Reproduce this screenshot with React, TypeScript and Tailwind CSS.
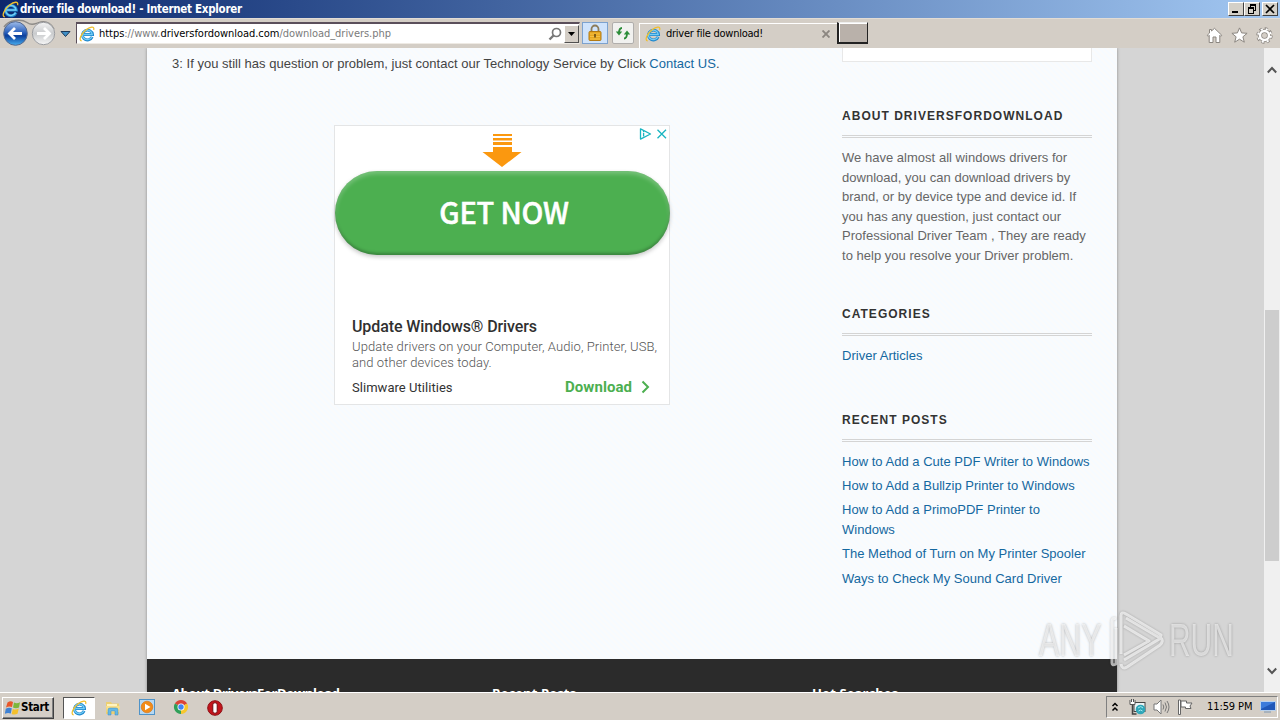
import React from 'react';
import clsx from 'clsx';

const TAHOMA = "font-['DejaVu_Sans_Condensed','DejaVu_Sans',sans-serif] [font-stretch:condensed]";

const recentPosts = [
  'How to Add a Cute PDF Writer to Windows',
  'How to Add a Bullzip Printer to Windows',
  'How to Add a PrimoPDF Printer to Windows',
  'The Method of Turn on My Printer Spooler',
  'Ways to Check My Sound Card Driver'
];

const IeIcon = ({ className }: { className?: string }) => (
  <svg viewBox="0 0 18 18" className={clsx('shrink-0', className)} fill="none">
    <path d="M14.800 12.300A5.700 5.500 0 1 1 15.200 9.600H5" stroke="#1d86cc" strokeWidth="3.200" />
    <path d="M14.400 12.300A5.500 5.300 0 1 1 14.900 9.600H5" stroke="#74cdf5" strokeWidth="1.500" />
    <path d="M3 16.800C-.8 16.500 2 9 8 4.300 12.500.9 17.800-.3 16.500 4.500" stroke="#f0bf2e" strokeWidth="1.400" />
  </svg>
);

const TitleBar = () => (
  <div className="flex h-[18px] shrink-0 items-center bg-linear-to-r from-[#0c266c] to-[#a3c8f2] pl-[2px] pr-[2px]">
    <IeIcon className="h-[17px] w-[17px]" />
    <span className={clsx(TAHOMA, 'ml-[1px] text-[11.500px] font-bold leading-[18px] whitespace-nowrap text-white tracking-[-0.29px]')}>
      driver file download! - Internet Explorer
    </span>
    <div className="ml-auto flex">
      {['min', 'restore', 'close'].map(kind => (
        <div
          key={kind}
          className={clsx(
            'h-[14px] w-4 border border-t-white border-l-white border-r-[#404040] border-b-[#404040] bg-[#d4d0c8]',
            kind === 'close' && 'ml-[2px]'
          )}
        >
          <svg viewBox="0 0 14 12" className="h-3 w-[14px]" fill="none" stroke="#000" shapeRendering="crispEdges">
            {kind === 'min' && <path d="M3 9h6" strokeWidth="2" />}
            {kind === 'restore' && (
              <>
                <path d="M5 2h6M3 5h6" strokeWidth="2" />
                <path d="M5.500 3v1M10.500 3v4.500H9M3.500 6v4.500h5V6" />
              </>
            )}
            {kind === 'close' && <path d="M3 2l8 8M11 2l-8 8" strokeWidth="1.700" shapeRendering="auto" />}
          </svg>
        </div>
      ))}
    </div>
  </div>
);

const NavButtons = () => (
  <svg viewBox="0 0 76 30" className="h-[30px] w-[76px] shrink-0">
    <defs>
      <linearGradient id="back" x1="0" y1="0" x2="0" y2="1">
        <stop offset="0" stopColor="#9fbdea" />
        <stop offset=".45" stopColor="#2c62bd" />
        <stop offset=".6" stopColor="#0b3f9c" />
        <stop offset="1" stopColor="#48aef0" />
      </linearGradient>
      <linearGradient id="forward" x1="0" y1="0" x2="0" y2="1">
        <stop offset="0" stopColor="#f4f4f4" />
        <stop offset=".5" stopColor="#c9cbcd" />
        <stop offset="1" stopColor="#f6f6f6" />
      </linearGradient>
    </defs>
    <path d="M4 8C9 0 22 0 27 3.500s8 1 14-.5 11 3 13 7" fill="none" stroke="#8d8b88" strokeWidth="1.500" />
    <circle cx="15.500" cy="14.500" r="11.800" fill="url(#back)" stroke="#52688f" />
    <circle cx="43.500" cy="14.500" r="11.200" fill="url(#forward)" stroke="#9c9ea2" />
    <path d="M22 14.500H10M15 9l-5.500 5.500L15 20" fill="none" stroke="#fff" strokeWidth="2.800" />
    <path d="M37 14.500h12M44 9l5.500 5.500L44 20" fill="none" stroke="#fff" strokeWidth="2.800" />
    <path d="M61 12.500h9l-4.500 5z" fill="#3f8fc6" stroke="#1c3858" />
  </svg>
);

const Toolbar = () => (
  <div className={clsx(TAHOMA, 'flex h-[30px] shrink-0 items-start border-t border-[#e2dcd5] bg-[#d4cec6] text-[11px] text-black')}>
    <NavButtons />
    <div className="mt-[3px] flex h-[22px] w-[504px] items-center border border-t-2 border-[#5b4f5b] border-r-[#d8d4cc] border-b-[#eeeae4] bg-white pl-[2px]">
      <IeIcon className="h-4 w-4" />
      <span className="ml-[4px] text-[11px] leading-[18px] tracking-[-0.04px] whitespace-nowrap text-[#7b7b7b]">
        <span className="text-black">https</span>://www.<span className="text-black">driversfordownload.com</span>/download_drivers.php
      </span>
      <svg viewBox="0 0 14 14" className="ml-auto h-[14px] w-[14px]" fill="none" stroke="#777">
        <circle cx="8.500" cy="5.500" r="4" strokeWidth="1.700" />
        <path d="M5.500 8.500L1.500 12.500" strokeWidth="2.400" />
      </svg>
      <div className="ml-[2px] flex h-[18px] w-[15px] items-center justify-center border border-t-white border-l-white border-r-[#505050] border-b-[#505050] bg-[#d4cec6]">
        <svg viewBox="0 0 7 4" className="h-1 w-[7px]"><path d="M0 0h7L3.500 4z" /></svg>
      </div>
    </div>
    <div className="ml-[2px] mt-[3px] flex h-[22px] w-[26px] items-center justify-center border border-[#7da2ce] bg-[#cfe3fb]">
      <svg viewBox="0 0 14 18" className="h-[18px] w-[14px]">
        <path d="M3.500 9V5a3.500 3.500 0 0 1 7 0v4" fill="none" stroke="#8c7b58" strokeWidth="1.800" />
        <rect x="1" y="7.500" width="12" height="9" rx="1" fill="#e6a520" stroke="#b27a14" />
        <path d="M2 10h10M2 12.500h10M2 15h10" stroke="#f2c145" />
        <path d="M7 10v3.500" stroke="#5e4210" strokeWidth="1.500" />
      </svg>
    </div>
    <div className="ml-1 mt-[3px] flex h-[22px] w-[22px] items-center justify-center rounded-[2px] border border-[#b0aeac] bg-[#f1f1ef]">
      <svg viewBox="0 0 16 14" className="h-[14px] w-4" fill="none" stroke="#2b8c38" strokeWidth="1.800">
        <path d="M7 2C4.500 2 4 4 4 7.500" />
        <path d="M.8 5.500h6.400L4 9.500z" fill="#2b8c38" stroke="none" />
        <path d="M9 12.500c2.500 0 3-2 3-5.500" />
        <path d="M8.800 8.500h6.400L12 4.500z" fill="#2b8c38" stroke="none" />
      </svg>
    </div>
    <div className="ml-[5px] mt-[4px] flex h-[25px] w-[198px] items-center border-t border-l border-white pb-[4px] pl-[5px]">
      <IeIcon className="h-4 w-4" />
      <span className="ml-[5px] leading-[18px] tracking-[-0.25px] whitespace-nowrap">driver file download!</span>
      <svg viewBox="0 0 8 8" className="mr-[7px] ml-auto h-2 w-2" stroke="#8b8680" strokeWidth="1.900">
        <path d="M.5.5l7 7M7.500.5l-7 7" />
      </svg>
    </div>
    <div className="mt-[3px] h-[22px] w-[31px] border border-t-[#eee] border-l-2 border-[#222] border-b-2 bg-[#b9b1aa] shadow-[inset_1px_1px_0_#fff]" />
    <div className="mt-[8px] mr-[7px] ml-auto flex gap-[8px]">
      <svg viewBox="0 0 17 17" className="h-[17px] w-[17px]" fill="#fff" stroke="#8b8680">
        <path d="M8.500 1.300l7.300 7-1 1-1-1V15.500h-3.800V10H7v5.500H3.200V8.300l-1 1-1-1L3.500 6V2.500h2V4z" />
      </svg>
      <svg viewBox="0 0 17 17" className="h-[17px] w-[17px]" fill="#fff" stroke="#8b8680">
        <path d="M8.500.9l2.100 5 5.500.4-4.200 3.500 1.400 5.400-4.800-3-4.800 3 1.400-5.400L.9 6.300l5.500-.4z" />
      </svg>
      <svg viewBox="0 0 17 17" className="h-[17px] w-[17px]">
        <circle cx="8.500" cy="8.500" r="6.700" fill="none" stroke="#8b8680" strokeWidth="3" strokeDasharray="3.060 2.200" />
        <circle cx="8.500" cy="8.500" r="4.500" fill="none" stroke="#8b8680" strokeWidth="4" />
        <circle cx="8.500" cy="8.500" r="6.500" fill="none" stroke="#fff" strokeWidth="1.800" strokeDasharray="2 3.105" strokeDashoffset="-.5" />
        <circle cx="8.500" cy="8.500" r="4.500" fill="none" stroke="#fff" strokeWidth="2.500" />
      </svg>
    </div>
  </div>
);

const AdCard = () => (
  <div className="mt-[52px] ml-[162px] h-[280px] w-[336px] border border-[#e4e5e6] bg-white font-[Roboto,sans-serif]">
    <div className="relative flex h-[45px] justify-center">
      <svg viewBox="0 0 40 34" className="mt-2 h-[34px] w-10" fill="#fb980f">
        <path d="M11 0h19v2H11zM11 4h19v2.500H11zM11 8h19v3H11zM11 13h19v5h9.500L20 33 .5 18H11z" />
      </svg>
      <svg viewBox="0 0 28 12" className="absolute top-[2px] right-[2px] h-3 w-7" fill="none" stroke="#18b5c1" strokeWidth="1.300">
        <path d="M1.500.9v10.200L11.500 6z" strokeLinejoin="round" />
        <path d="M4.600 5v3.500M4.600 3v1.200" />
        <path d="M18.500 1.700l8.500 8.600M27 1.700l-8.500 8.600" />
      </svg>
    </div>
    <div className="-mr-px flex h-[84px] items-center justify-center rounded-[42px] bg-[#4caf50] pl-[3px] shadow-[0_2px_4px_rgba(0,0,0,0.22),inset_0_3px_4px_rgba(255,255,255,0.25),inset_0_-2px_3px_rgba(0,0,0,0.25)]">
      <span className="-mt-[2px] font-['Noto_Sans_CJK_SC',sans-serif] text-[29px] font-medium tracking-[-0.2px] text-white [-webkit-text-stroke:0.5px_white]">GET NOW</span>
    </div>
    <div className="pt-[62px] pr-[10px] pl-[17px]">
      <h3 className="text-base leading-5 font-medium tracking-[-0.1px] text-[#303030]">Update Windows® Drivers</h3>
      <p className="mt-[2px] text-[13px] leading-4 font-light tracking-[0.085px] whitespace-nowrap text-[#555]">
        Update drivers on your Computer, Audio, Printer, USB,
        <br />
        and other devices today.
      </p>
      <div className="mt-[6px] flex items-center justify-between pr-[9px]">
        <span className="pt-px text-[13px] tracking-[0.04px] text-[#333]">Slimware Utilities</span>
        <span className="flex items-center text-[15px] leading-5 font-bold tracking-[0.05px] text-[#4caf50]">
          Download
          <svg viewBox="0 0 9 14" className="ml-[9px] h-[14px] w-[9px]" fill="none" stroke="#4caf50" strokeWidth="2">
            <path d="M1.500 1.500L7 7l-5.500 5.500" />
          </svg>
        </span>
      </div>
    </div>
  </div>
);

const SidebarTitle = ({ children }: { children: React.ReactNode }) => (
  <h4 className="h-[32px] border-b-[3px] border-double border-[#d4d4d4] text-[12px] leading-5 font-bold tracking-[1.030px] whitespace-nowrap text-[#333]">
    {children}
  </h4>
);

const Sidebar = () => (
  <aside className="w-[250px] shrink-0 text-[13px] leading-[19.500px] tracking-[0.02px]">
    <div className="h-[14px] border border-t-0 border-[#e8e8e8] bg-white" />
    <div className="mt-[44px]">
      <SidebarTitle>ABOUT DRIVERSFORDOWNLOAD</SidebarTitle>
      <p className="mt-[10px] whitespace-nowrap text-[#666]">
        We have almost all windows drivers for
        <br />
        download, you can download drivers by
        <br />
        brand, or by device type and device id. If
        <br />
        you has any question, just contact our
        <br />
        Professional Driver Team , They are ready
        <br />
        to help you resolve your Driver problem.
      </p>
    </div>
    <div className="mt-[39px]">
      <SidebarTitle>CATEGORIES</SidebarTitle>
      <a className="mt-[10px] block text-[#1468a0]">Driver Articles</a>
    </div>
    <div className="mt-[44.500px]">
      <SidebarTitle>RECENT POSTS</SidebarTitle>
      <ul className="mt-[9.500px] space-y-[4.900px]">
        {recentPosts.map(post => (
          <li key={post} className="text-[#1468a0]">{post}</li>
        ))}
      </ul>
    </div>
  </aside>
);

const Page = () => (
  <div className="flex w-[970px] flex-col bg-[#f9fbfd] shadow-[0_0_3px_rgba(0,0,0,0.35)]">
    <div className="flex h-[611px] shrink-0 justify-between bg-[repeating-linear-gradient(45deg,#f7fbff_0px,#f7fbff_2px,#fafbfc_2px,#fafbfc_4px)] px-[25px]">
      <main>
        <p className="pt-[6px] text-[13px] leading-[19px] tracking-[0.016px] whitespace-nowrap text-[#444]">
          3: If you still has question or problem, just contact our Technology Service by Click{' '}
          <a className="text-[#1468a0]">Contact US</a>.
        </p>
        <AdCard />
      </main>
      <Sidebar />
    </div>
    <footer className="grid h-[33px] shrink-0 grid-cols-[320px_320px_1fr] overflow-hidden bg-[#2b2b2b] pt-[24px] pl-[25px] font-['Open_Sans',sans-serif] text-[13px] leading-5 font-bold tracking-[-0.36px] whitespace-nowrap text-white">
      <span>About DriversForDownload</span>
      <span className="tracking-[0.1px]">Recent Posts</span>
      <span className="tracking-[0.1px]">Hot Searches</span>
    </footer>
  </div>
);

const Scrollbar = () => (
  <div className="flex w-4 shrink-0 flex-col items-center bg-[#f0f0f0]">
    <svg viewBox="0 0 10 8" className="mt-[18px] h-2 w-[10px]" fill="none" stroke="#555" strokeWidth="2">
      <path d="M.8 6.500L5 2l4.200 4.500" />
    </svg>
    <div className="mt-[236px] h-[251px] w-[14px] bg-[#cdcdcd]" />
    <svg viewBox="0 0 10 8" className="mt-auto mb-[17px] h-2 w-[10px]" fill="none" stroke="#555" strokeWidth="2">
      <path d="M.8 1.500L5 6l4.200-4.500" />
    </svg>
  </div>
);

const Watermark = () => (
  <div className="absolute top-[560px] left-[1039px] flex h-16 items-center font-['Liberation_Sans_Narrow','Liberation_Sans',sans-serif] text-[46px] text-white/60 [text-shadow:0_0_3px_rgba(0,0,0,0.3)]">
    <span className="w-[70px] origin-left scale-x-[0.66]">ANY</span>
    <svg viewBox="0 0 60 64" className="h-16 w-[60px] drop-shadow-[0_0_1px_rgba(0,0,0,0.35)]" fill="none" stroke="rgba(255,255,255,0.65)" strokeWidth="3" strokeLinejoin="round">
      <path d="M12 46V8q0-5 5-2l35 21-1 3L17 10M7 11q-4-2-4 3v41q0 3 4 1V20M15 18l25 15-25 14M12 56q1 6 6 3l33-22q4-4 1-7L15 52" />
    </svg>
    <span className="origin-left scale-x-[0.65]">RUN</span>
  </div>
);

const Taskbar = () => (
  <div className={clsx(TAHOMA, 'flex h-7 shrink-0 items-center border-t border-white bg-[#d4cec6] pl-[2px] text-black')}>
    <div className="mt-[2px] flex h-[22px] w-[52px] items-center border border-t-white border-l-white border-r-[#404040] border-b-[#404040] shadow-[inset_-1px_-1px_0_#808080]">
      <svg viewBox="0 0 16 16" className="ml-[2px] h-4 w-4 shrink-0">
        <path d="M2.500 2.500q3-2 5.500-.5L7 7Q4 5.800 1 7.500z" fill="#e9572a" />
        <path d="M9 2.600q3 1.300 6-.3L14 7.500q-3 1.500-6 0z" fill="#7db73a" />
        <path d="M.8 8.700q3-1.500 6-.4l-1 5.200q-3-1.300-6 .4z" fill="#3f82d4" />
        <path d="M7.800 8.900q3 1.300 6-.3l-1.300 5.200q-3 1.500-5.800.2z" fill="#f4c02c" />
      </svg>
      <span className="text-[11.500px] font-bold tracking-[-0.3px]">Start</span>
    </div>
    <div className="mt-[2px] ml-[9px] flex h-[22px] w-8 items-center justify-center border border-t-[#555] border-l-[#555] border-r-white border-b-white bg-white">
      <IeIcon className="h-4 w-4" />
    </div>
    <svg viewBox="0 0 16 16" className="mt-[2px] ml-[10px] h-4 w-4">
      <path d="M1 2h5l1 1.500h7V14H1z" fill="#eccf72" />
      <path d="M2 4h10v3H2z" fill="#fff3bf" />
      <path d="M1 6h14l-1 6H2z" fill="#f7df8c" />
      <path d="M3 15V10q0-2 2-2h6q2 0 2 2v5h-3v-4H6v4z" fill="#64b8e6" stroke="#388abe" strokeWidth=".5" />
    </svg>
    <svg viewBox="0 0 16 16" className="mt-[1px] ml-[18px] h-4 w-4">
      <rect x=".5" y=".5" width="15" height="15" fill="#b6d8f2" stroke="#4f93c8" />
      <circle cx="8" cy="8" r="5.800" fill="#f28b18" stroke="#d96e0a" strokeWidth=".6" />
      <path d="M6 4.700v6.600L11.500 8z" fill="#fff" />
    </svg>
    <svg viewBox="0 0 16 16" className="mt-[1px] ml-[18px] h-4 w-4">
      <path d="M8 8L1.900 4.500A7 7 0 0 1 14.100 4.500z" fill="#db4437" />
      <path d="M8 8l6.100-3.500A7 7 0 0 1 8 15z" fill="#f7c72d" />
      <path d="M8 8v7A7 7 0 0 1 1.900 4.500z" fill="#2f9f58" />
      <circle cx="8" cy="8" r="3.500" fill="#fff" />
      <circle cx="8" cy="8" r="2.700" fill="#4285f4" />
    </svg>
    <svg viewBox="0 0 16 16" className="mt-[2px] ml-[18px] h-4 w-4">
      <circle cx="8" cy="8" r="7.300" fill="#c4151c" stroke="#8d1015" />
      <rect x="5.800" y="2.800" width="4.400" height="10.400" rx="2" fill="#fff" stroke="#6f0b10" />
    </svg>
    <div className="mt-[1px] mr-[2px] ml-auto flex h-[22px] w-[172px] items-center border border-t-[#808080] border-l-[#808080] border-r-white border-b-white">
      <svg viewBox="0 0 8 10" className="ml-[4px] h-[10px] w-2" fill="none" stroke="#000" strokeWidth="1.500">
        <path d="M1.500 4L4 1.500 6.500 4M1.500 8.500L4 6l2.500 2.500" />
      </svg>
      <svg viewBox="0 0 17 16" className="ml-[10px] h-4 w-[17px]">
        <rect x="5" y="3.500" width="11" height="9" fill="#eaf3f4" stroke="#444" />
        <path d="M3.500 6v9h4" fill="none" stroke="#444" strokeWidth="1.500" />
        <path d="M1 1v4.500h5V1M2.500 0v3M4.500 0v3" fill="#fff" stroke="#555" />
        <circle cx="11.500" cy="10.500" r="4.800" fill="#2fa6b8" />
        <path d="M9 9q3-3 5 0M9.500 12q2-2 4 0" fill="none" stroke="#a5eaf0" />
      </svg>
      <svg viewBox="0 0 17 16" className="ml-[7px] h-4 w-[17px]" fill="none" stroke="#777">
        <path d="M1 5h3l4-4v14l-4-4H1z" fill="#fff" />
        <path d="M10 5.500q1.500 2.500 0 5M12 3.500q3 4.500 0 9M14 2q4 6 0 12" />
      </svg>
      <svg viewBox="0 0 17 16" className="ml-[7px] h-4 w-[17px]" fill="#fff" stroke="#666">
        <path d="M2.500 15.500V1.500M4 2h5.500v2H15l-2 3 1 2.500H8.500V8H4z" />
        <path d="M1.500 1h2v14.500h-2z" />
      </svg>
      <span className="mt-px ml-[13px] text-[11px] tracking-[-0.1px] whitespace-nowrap">11:59 PM</span>
      <svg viewBox="0 0 16 14" className="mr-[1px] ml-auto h-[14px] w-4 shrink-0">
        <path d="M.5 1.500h15v9H.5z" fill="#1f57b8" stroke="#b9d2ee" />
        <path d="M1 2h14L1 9z" fill="#3b7bdb" />
        <path d="M4 12h7" stroke="#9aa8b8" strokeWidth="1.500" />
      </svg>
    </div>
  </div>
);

const App = () => {
  return (
    <div className="flex h-[720px] w-[1280px] flex-col overflow-hidden font-['Liberation_Sans',Arial,sans-serif]">
      <TitleBar />
      <Toolbar />
      <div className="relative flex h-[644px] shrink-0 overflow-hidden bg-[#d5d5d5]">
        <div className="flex flex-1 pl-[147px]">
          <Page />
        </div>
        <Scrollbar />
        <Watermark />
      </div>
      <Taskbar />
    </div>
  );
};

export default App;
